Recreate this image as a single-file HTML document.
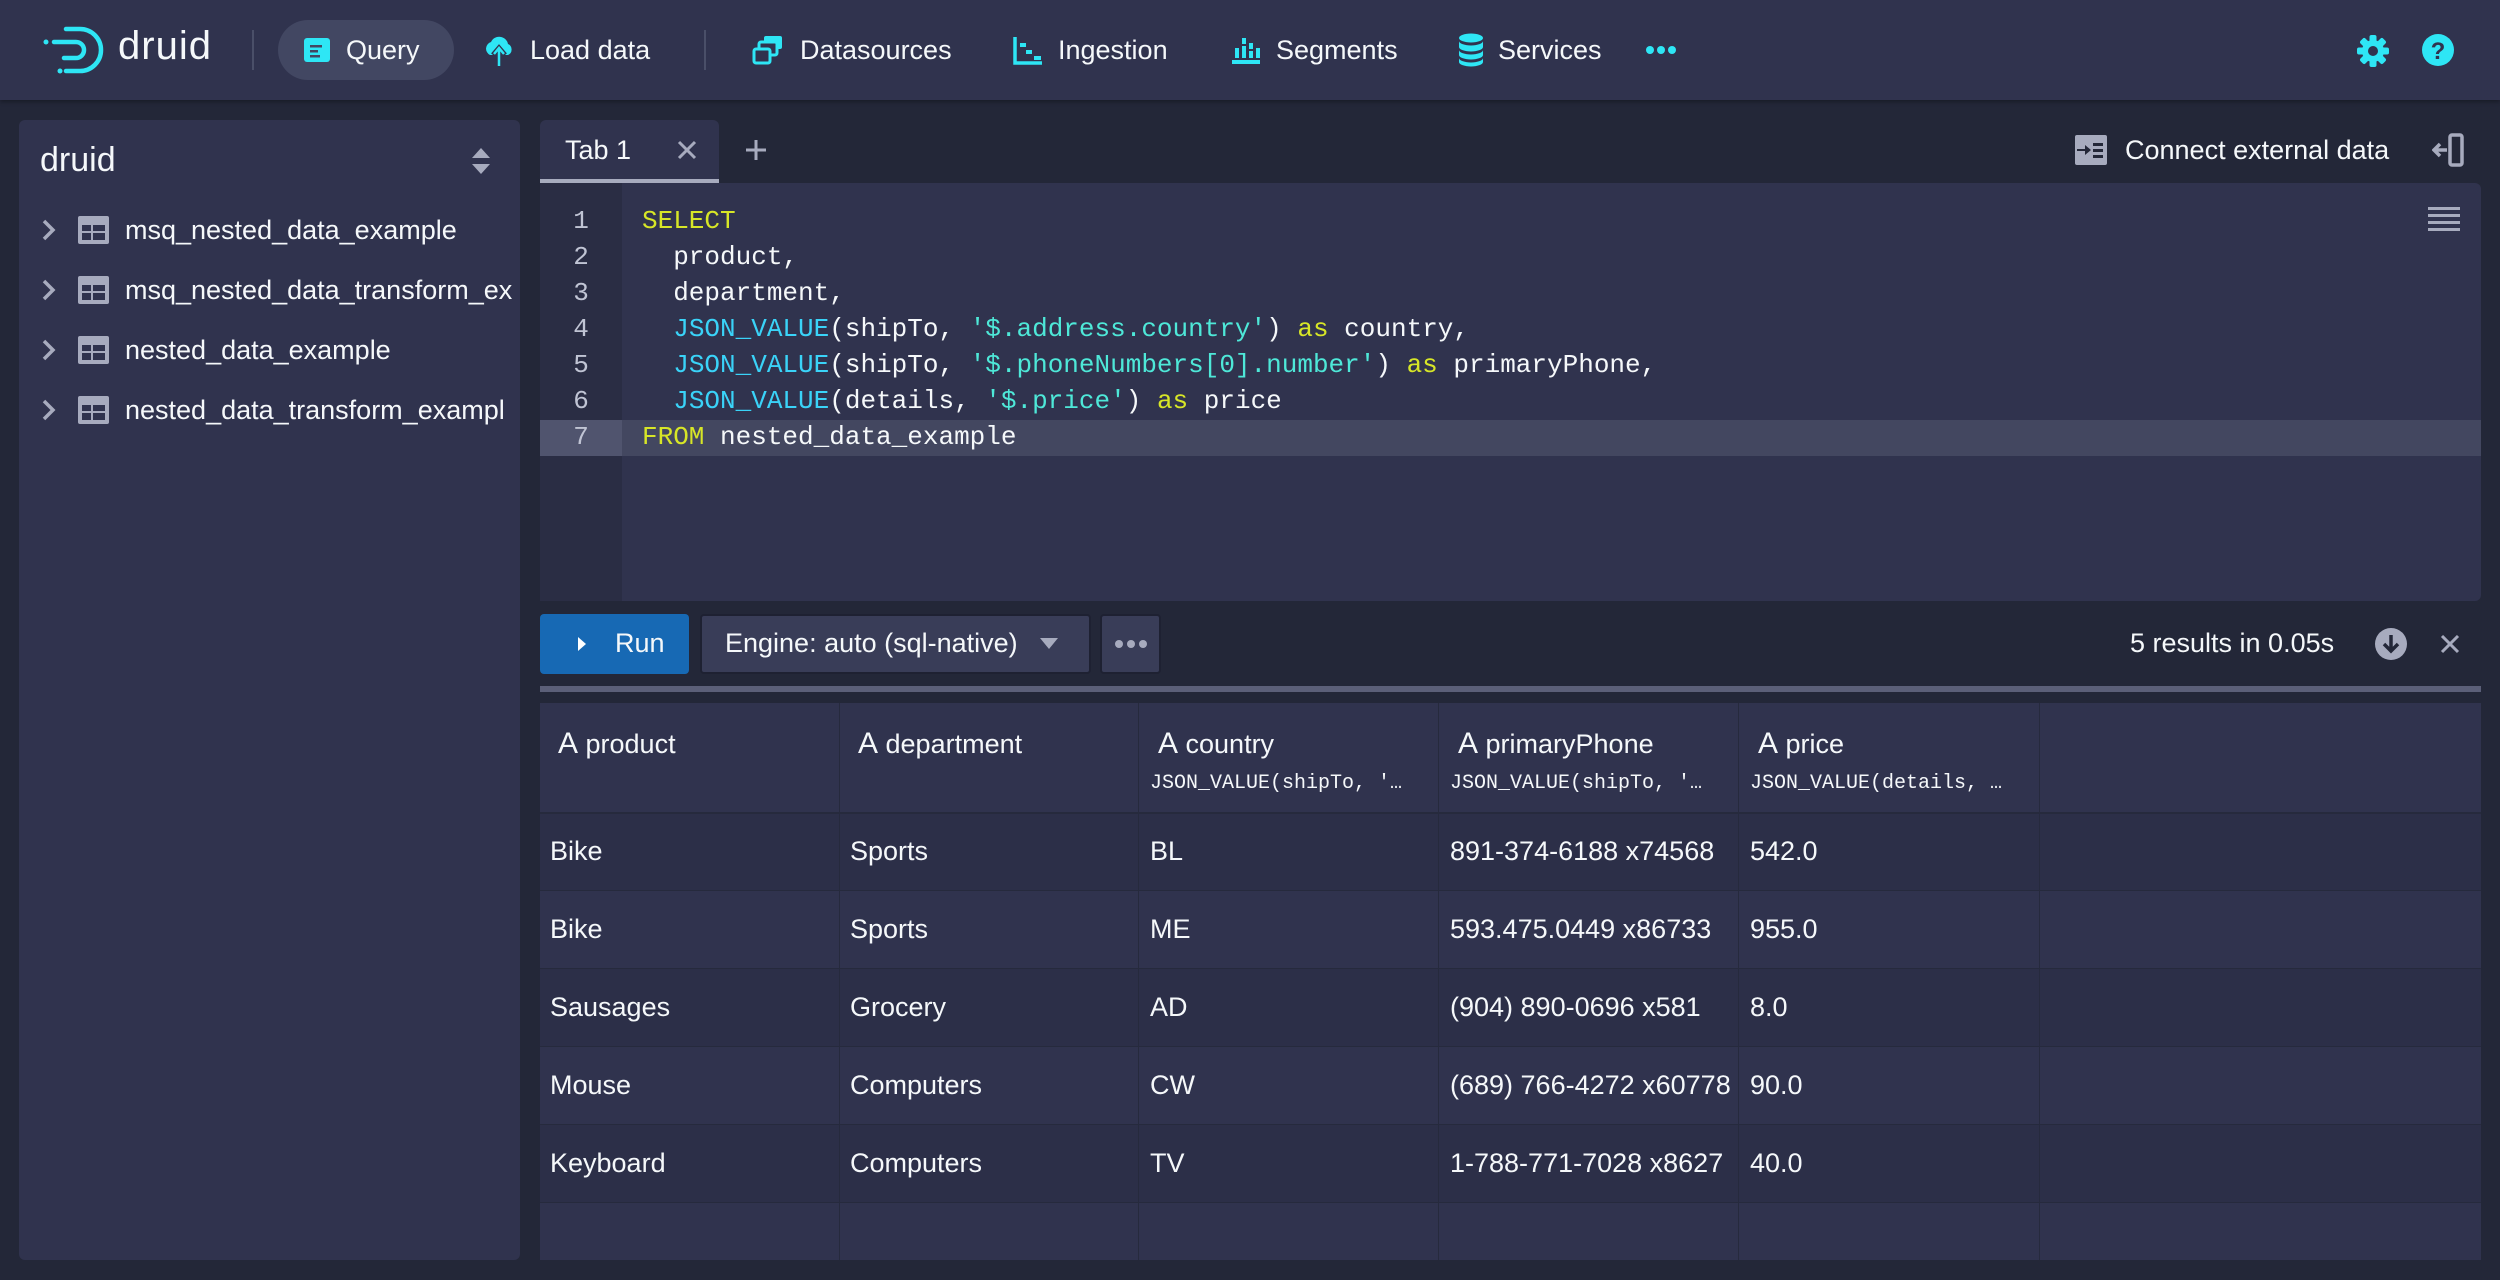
<!DOCTYPE html>
<html><head><meta charset="utf-8"><style>
*{box-sizing:border-box;margin:0;padding:0}
body{width:2500px;height:1280px;background:#232738;font-family:"Liberation Sans",sans-serif;color:#f5f8fa;position:relative;overflow:hidden}
.a{position:absolute}
.nav{left:0;top:0;width:2500px;height:100px;background:#30334e;box-shadow:0 2px 4px rgba(0,0,0,.3)}
.ni{position:absolute;top:30px;font-size:27px;height:40px;line-height:40px;display:flex;align-items:center;gap:14px}
.cy{fill:#2ee6f5}
.side{left:19px;top:120px;width:501px;height:1140px;background:#30334e;border-radius:6px}
.tr{position:absolute;left:0;font-size:27px;display:flex;align-items:center;height:40px}
.code{font-family:"Liberation Mono",monospace;font-size:26px}
.ln{position:absolute;left:0;width:82px;text-align:center;color:#c0c4d4}
.cl{position:absolute;left:102px;white-space:pre;color:#f5f8fa}
.k{color:#d7e627}.f{color:#3ad3f8}.s{color:#4ee8d8}
.cell{position:absolute;font-size:27px;white-space:nowrap}
</style></head><body>
<div class="a nav">
 <svg class="a" style="left:40px;top:24px" width="70" height="52" viewBox="0 0 70 52"><path d="M26 5 H40 A21 21 0 0 1 40 47 H26" fill="none" stroke="#2ee6f5" stroke-width="4.5" stroke-linecap="round"/><path d="M14 18 H36 A8 8 0 0 1 36 34 H24" fill="none" stroke="#2ee6f5" stroke-width="4.5" stroke-linecap="round"/><circle cx="6" cy="18" r="2.5" fill="#2ee6f5"/><circle cx="20" cy="47" r="2.5" fill="#2ee6f5"/></svg>
 <div class="a" style="left:118px;top:24px;font-size:40px;font-weight:300;color:#f5f8fa;letter-spacing:1px">druid</div>
 <div class="a" style="left:252px;top:30px;width:2px;height:40px;background:#4a4f68"></div>
 <div class="a" style="left:278px;top:20px;width:176px;height:60px;border-radius:30px;background:#424762"></div>
 <div class="ni" style="left:302px"><svg width="30" height="30" viewBox="0 0 30 30"><rect x="2" y="3" width="26" height="24" rx="3" class="cy"/><rect x="8" y="10" width="12" height="2.5" fill="#424762"/><rect x="8" y="15" width="8" height="2.5" fill="#424762"/><rect x="8" y="20" width="10" height="2.5" fill="#424762"/></svg>Query</div>
 <div class="ni" style="left:482px"><svg width="34" height="34" viewBox="0 0 34 34"><path d="M8 22 A7 7 0 0 1 9 9 A9 9 0 0 1 26 11 A6 6 0 0 1 26 22 Z" class="cy"/><path d="M17 33 V16 M11 22 L17 15 L23 22" stroke="#30334e" stroke-width="5" fill="none"/><path d="M17 33 V16 M12 21 L17 15 L22 21" stroke="#2ee6f5" stroke-width="2.5" fill="none"/></svg>Load data</div>
 <div class="a" style="left:704px;top:30px;width:2px;height:40px;background:#4a4f68"></div>
 <div class="ni" style="left:752px"><svg width="34" height="34" viewBox="0 0 34 34"><rect x="12" y="3" width="18" height="13" rx="2" class="cy"/><rect x="7" y="9" width="18" height="13" rx="2" fill="#30334e" stroke="#2ee6f5" stroke-width="3"/><rect x="2" y="16" width="16" height="14" rx="2" fill="#30334e" stroke="#2ee6f5" stroke-width="3"/></svg>Datasources</div>
 <div class="ni" style="left:1012px"><svg width="32" height="32" viewBox="0 0 32 32"><path d="M3 3V29H30" stroke="#2ee6f5" stroke-width="3.5" fill="none"/><rect x="8" y="9" width="6" height="4" class="cy"/><rect x="14" y="16" width="6" height="4" class="cy"/><rect x="22" y="22" width="7" height="4" class="cy"/></svg>Ingestion</div>
 <div class="ni" style="left:1230px"><svg width="32" height="32" viewBox="0 0 32 32"><rect x="2" y="26" width="28" height="4" class="cy"/><rect x="5" y="14" width="4" height="10" class="cy"/><rect x="12" y="4" width="4" height="6" class="cy"/><rect x="12" y="12" width="4" height="12" class="cy"/><rect x="19" y="9" width="4" height="6" class="cy"/><rect x="19" y="17" width="4" height="7" class="cy"/><rect x="26" y="14" width="4" height="10" class="cy"/></svg>Segments</div>
 <div class="ni" style="left:1458px"><svg width="26" height="34" viewBox="0 0 26 34"><ellipse cx="13" cy="5" rx="12" ry="4.5" class="cy"/><path d="M1 8 V14 A12 4.5 0 0 0 25 14 V8 A12 4.5 0 0 1 1 8Z M1 17 V22 A12 4.5 0 0 0 25 22 V17 A12 4.5 0 0 1 1 17Z M1 25 V29 A12 4.5 0 0 0 25 29 V25 A12 4.5 0 0 1 1 25Z" class="cy"/></svg>Services</div>
 <svg class="a" style="left:1646px;top:44px" width="30" height="12"><circle cx="4" cy="6" r="4" class="cy"/><circle cx="15" cy="6" r="4" class="cy"/><circle cx="26" cy="6" r="4" class="cy"/></svg>
 <svg class="a" style="left:2356px;top:34px" width="34" height="34" viewBox="0 0 34 34"><g class="cy"><circle cx="17" cy="17" r="11"/><rect x="13.5" y="1" width="7" height="32" rx="2"/><rect x="13.5" y="1" width="7" height="32" rx="2" transform="rotate(45 17 17)"/><rect x="13.5" y="1" width="7" height="32" rx="2" transform="rotate(90 17 17)"/><rect x="13.5" y="1" width="7" height="32" rx="2" transform="rotate(135 17 17)"/></g><circle cx="17" cy="17" r="5" fill="#30334e"/></svg>
 <svg class="a" style="left:2421px;top:33px" width="34" height="34" viewBox="0 0 34 34"><circle cx="17" cy="17" r="16" class="cy"/><text x="17" y="26" text-anchor="middle" font-family="Liberation Sans" font-weight="bold" font-size="24" fill="#30334e">?</text></svg>
</div>

<div class="a side">
 <div class="a" style="left:21px;top:21px;font-size:34px">druid</div>
 <svg class="a" style="left:452px;top:28px" width="20" height="26" viewBox="0 0 20 26"><path d="M10 0 L19 10 H1Z M10 26 L19 16 H1Z" fill="#a7abbe"/></svg>
 <div class="tr" style="top:90px"><svg style="margin-left:21px" width="18" height="24" viewBox="0 0 18 24"><path d="M4 3 L13 12 L4 21" stroke="#a7abbe" stroke-width="3.5" fill="none"/></svg><svg style="margin-left:20px" width="31" height="28" viewBox="0 0 31 28"><rect width="31" height="28" rx="2" fill="#a7abbe"/><g fill="#30334e"><rect x="4" y="9" width="9" height="6"/><rect x="15" y="9" width="12" height="6"/><rect x="4" y="17" width="9" height="7"/><rect x="15" y="17" width="12" height="7"/></g></svg><span style="margin-left:16px">msq_nested_data_example</span></div>
 <div class="tr" style="top:150px"><svg style="margin-left:21px" width="18" height="24" viewBox="0 0 18 24"><path d="M4 3 L13 12 L4 21" stroke="#a7abbe" stroke-width="3.5" fill="none"/></svg><svg style="margin-left:20px" width="31" height="28" viewBox="0 0 31 28"><rect width="31" height="28" rx="2" fill="#a7abbe"/><g fill="#30334e"><rect x="4" y="9" width="9" height="6"/><rect x="15" y="9" width="12" height="6"/><rect x="4" y="17" width="9" height="7"/><rect x="15" y="17" width="12" height="7"/></g></svg><span style="margin-left:16px">msq_nested_data_transform_ex</span></div>
 <div class="tr" style="top:210px"><svg style="margin-left:21px" width="18" height="24" viewBox="0 0 18 24"><path d="M4 3 L13 12 L4 21" stroke="#a7abbe" stroke-width="3.5" fill="none"/></svg><svg style="margin-left:20px" width="31" height="28" viewBox="0 0 31 28"><rect width="31" height="28" rx="2" fill="#a7abbe"/><g fill="#30334e"><rect x="4" y="9" width="9" height="6"/><rect x="15" y="9" width="12" height="6"/><rect x="4" y="17" width="9" height="7"/><rect x="15" y="17" width="12" height="7"/></g></svg><span style="margin-left:16px">nested_data_example</span></div>
 <div class="tr" style="top:270px"><svg style="margin-left:21px" width="18" height="24" viewBox="0 0 18 24"><path d="M4 3 L13 12 L4 21" stroke="#a7abbe" stroke-width="3.5" fill="none"/></svg><svg style="margin-left:20px" width="31" height="28" viewBox="0 0 31 28"><rect width="31" height="28" rx="2" fill="#a7abbe"/><g fill="#30334e"><rect x="4" y="9" width="9" height="6"/><rect x="15" y="9" width="12" height="6"/><rect x="4" y="17" width="9" height="7"/><rect x="15" y="17" width="12" height="7"/></g></svg><span style="margin-left:16px">nested_data_transform_exampl</span></div>
</div>

<!-- tab -->
<div class="a" style="left:540px;top:120px;width:179px;height:63px;background:#30334e;border-radius:6px 6px 0 0;border-bottom:4px solid #a7abbe"></div>
<div class="a" style="left:565px;top:135px;font-size:27px">Tab 1</div>
<svg class="a" style="left:677px;top:140px" width="20" height="20"><path d="M2 2L18 18M18 2L2 18" stroke="#a7abbe" stroke-width="3"/></svg>
<svg class="a" style="left:745px;top:139px" width="22" height="22"><path d="M11 1V21M1 11H21" stroke="#a7abbe" stroke-width="3"/></svg>
<svg class="a" style="left:2075px;top:135px" width="32" height="30" viewBox="0 0 32 30"><rect width="32" height="30" rx="2" fill="#a7abbe"/><g fill="#232738"><path d="M2 14H10V10L16 15L10 20V16H2Z"/><rect x="18" y="8" width="10" height="3"/><rect x="18" y="14" width="10" height="3"/><rect x="18" y="20" width="10" height="3"/></g></svg>
<div class="a" style="left:2125px;top:135px;font-size:27px">Connect external data</div>
<svg class="a" style="left:2432px;top:133px" width="34" height="34" viewBox="0 0 34 34"><rect x="18" y="2" width="12" height="30" rx="2" fill="none" stroke="#a7abbe" stroke-width="3.5"/><path d="M2 17H15M8 11L2 17L8 23" stroke="#a7abbe" stroke-width="3.5" fill="none"/></svg>

<!-- editor -->
<div class="a" style="left:540px;top:183px;width:1941px;height:418px;background:#30334e;border-radius:0 6px 6px 6px"></div>
<div class="a" style="left:540px;top:183px;width:82px;height:418px;background:#2a2d44"></div>
<div class="a" style="left:540px;top:420px;width:1941px;height:36px;background:#434760"></div>
<div class="a" style="left:540px;top:420px;width:82px;height:36px;background:#50546e"></div>
<svg class="a" style="left:2428px;top:207px" width="32" height="26"><g fill="#a7abbe"><rect y="0" width="32" height="3"/><rect y="7" width="32" height="3"/><rect y="14" width="32" height="3"/><rect y="21" width="32" height="3"/></g></svg>
<div class="a code" style="left:540px;top:203px;width:1900px;line-height:36px">
 <div class="ln" style="top:0">1</div><div class="cl" style="top:0"><span class="k">SELECT</span></div>
 <div class="ln" style="top:36px">2</div><div class="cl" style="top:36px">  product,</div>
 <div class="ln" style="top:72px">3</div><div class="cl" style="top:72px">  department,</div>
 <div class="ln" style="top:108px">4</div><div class="cl" style="top:108px">  <span class="f">JSON_VALUE</span>(shipTo, <span class="s">'$.address.country'</span>) <span class="k">as</span> country,</div>
 <div class="ln" style="top:144px">5</div><div class="cl" style="top:144px">  <span class="f">JSON_VALUE</span>(shipTo, <span class="s">'$.phoneNumbers[0].number'</span>) <span class="k">as</span> primaryPhone,</div>
 <div class="ln" style="top:180px">6</div><div class="cl" style="top:180px">  <span class="f">JSON_VALUE</span>(details, <span class="s">'$.price'</span>) <span class="k">as</span> price</div>
 <div class="ln" style="top:216px">7</div><div class="cl" style="top:216px"><span class="k">FROM</span> nested_data_example</div>
</div>

<!-- run bar -->
<div class="a" style="left:540px;top:614px;width:149px;height:60px;background:#1769b4;border-radius:4px"></div>
<svg class="a" style="left:576px;top:635px" width="12" height="18"><path d="M2 2L10 9L2 16Z" fill="#fff"/></svg>
<div class="a" style="left:615px;top:628px;font-size:27px">Run</div>
<div class="a" style="left:700px;top:614px;width:391px;height:60px;background:#393d58;border-radius:4px;border:2px solid #1e2132"></div>
<div class="a" style="left:725px;top:628px;font-size:27px">Engine: auto (sql-native)</div>
<svg class="a" style="left:1040px;top:638px" width="18" height="12"><path d="M0 0H18L9 11Z" fill="#a7abbe"/></svg>
<div class="a" style="left:1100px;top:614px;width:61px;height:60px;background:#393d58;border-radius:4px;border:2px solid #1e2132"></div>
<svg class="a" style="left:1114px;top:638px" width="34" height="12"><circle cx="5" cy="6" r="4" fill="#a7abbe"/><circle cx="17" cy="6" r="4" fill="#a7abbe"/><circle cx="29" cy="6" r="4" fill="#a7abbe"/></svg>
<div class="a" style="left:2130px;top:628px;font-size:27px">5 results in 0.05s</div>
<svg class="a" style="left:2374px;top:627px" width="34" height="34"><circle cx="17" cy="17" r="16" fill="#a7abbe"/><path d="M17 8V24M10 17L17 24L24 17" stroke="#232738" stroke-width="3.5" fill="none"/></svg>
<svg class="a" style="left:2440px;top:634px" width="20" height="20"><path d="M2 2L18 18M18 2L2 18" stroke="#a7abbe" stroke-width="3"/></svg>
<div class="a" style="left:540px;top:686px;width:1941px;height:6px;background:#5b5f78"></div>

<!-- table -->
<div class="a" style="left:540px;top:703px;width:1941px;height:557px;background:#30334e"></div>
<div class="a" style="left:540px;top:812px;width:1941px;height:78px;background:#2c2f48;border-top:2px solid #262a3d"></div>
<div class="a" style="left:540px;top:968px;width:1941px;height:78px;background:#2c2f48"></div>
<div class="a" style="left:540px;top:1124px;width:1941px;height:78px;background:#2c2f48"></div>
<div class="a" style="left:540px;top:890px;width:1941px;height:1px;background:#262a3d"></div>
<div class="a" style="left:540px;top:968px;width:1941px;height:1px;background:#262a3d"></div>
<div class="a" style="left:540px;top:1046px;width:1941px;height:1px;background:#262a3d"></div>
<div class="a" style="left:540px;top:1124px;width:1941px;height:1px;background:#262a3d"></div>
<div class="a" style="left:540px;top:1202px;width:1941px;height:1px;background:#262a3d"></div>
<div class="a" style="left:839px;top:703px;width:1px;height:557px;background:#262a3d"></div>
<div class="a" style="left:1138px;top:703px;width:1px;height:557px;background:#262a3d"></div>
<div class="a" style="left:1438px;top:703px;width:1px;height:557px;background:#262a3d"></div>
<div class="a" style="left:1738px;top:703px;width:1px;height:557px;background:#262a3d"></div>
<div class="a" style="left:2039px;top:703px;width:1px;height:557px;background:#262a3d"></div>

<div class="cell" style="left:558px;top:727px"><span style="font-size:30px">A</span> product</div>
<div class="cell" style="left:858px;top:727px"><span style="font-size:30px">A</span> department</div>
<div class="cell" style="left:1158px;top:727px"><span style="font-size:30px">A</span> country</div>
<div class="cell" style="left:1458px;top:727px"><span style="font-size:30px">A</span> primaryPhone</div>
<div class="cell" style="left:1758px;top:727px"><span style="font-size:30px">A</span> price</div>
<div class="cell code" style="left:1150px;top:772px;font-size:20px">JSON_VALUE(shipTo, '…</div>
<div class="cell code" style="left:1450px;top:772px;font-size:20px">JSON_VALUE(shipTo, '…</div>
<div class="cell code" style="left:1750px;top:772px;font-size:20px">JSON_VALUE(details, …</div>

<div class="cell" style="left:550px;top:836px">Bike</div><div class="cell" style="left:850px;top:836px">Sports</div><div class="cell" style="left:1150px;top:836px">BL</div><div class="cell" style="left:1450px;top:836px">891-374-6188 x74568</div><div class="cell" style="left:1750px;top:836px">542.0</div>
<div class="cell" style="left:550px;top:914px">Bike</div><div class="cell" style="left:850px;top:914px">Sports</div><div class="cell" style="left:1150px;top:914px">ME</div><div class="cell" style="left:1450px;top:914px">593.475.0449 x86733</div><div class="cell" style="left:1750px;top:914px">955.0</div>
<div class="cell" style="left:550px;top:992px">Sausages</div><div class="cell" style="left:850px;top:992px">Grocery</div><div class="cell" style="left:1150px;top:992px">AD</div><div class="cell" style="left:1450px;top:992px">(904) 890-0696 x581</div><div class="cell" style="left:1750px;top:992px">8.0</div>
<div class="cell" style="left:550px;top:1070px">Mouse</div><div class="cell" style="left:850px;top:1070px">Computers</div><div class="cell" style="left:1150px;top:1070px">CW</div><div class="cell" style="left:1450px;top:1070px">(689) 766-4272 x60778</div><div class="cell" style="left:1750px;top:1070px">90.0</div>
<div class="cell" style="left:550px;top:1148px">Keyboard</div><div class="cell" style="left:850px;top:1148px">Computers</div><div class="cell" style="left:1150px;top:1148px">TV</div><div class="cell" style="left:1450px;top:1148px">1-788-771-7028 x8627</div><div class="cell" style="left:1750px;top:1148px">40.0</div>
</body></html>
